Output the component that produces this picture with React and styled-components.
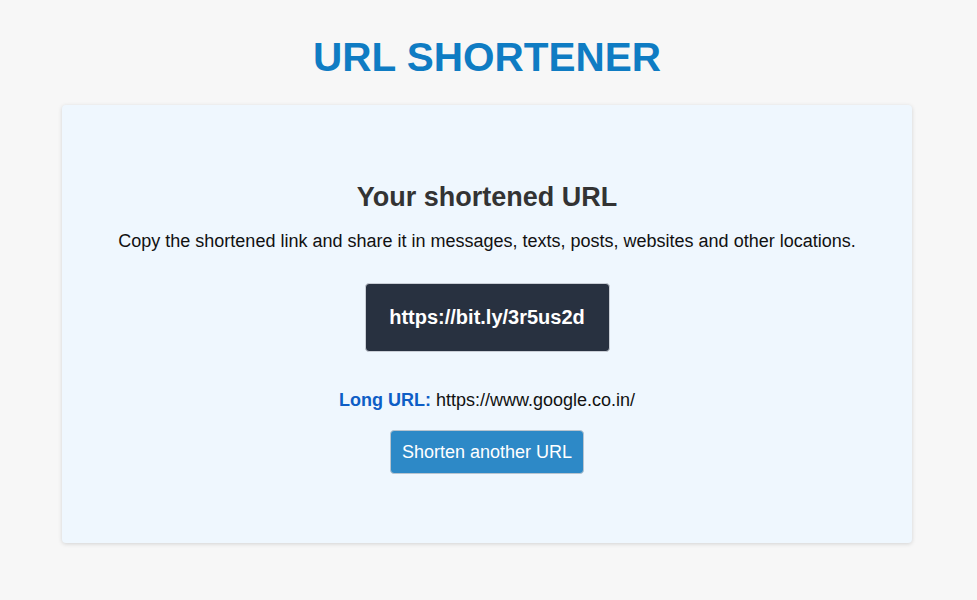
import React from 'react';
import styled, { createGlobalStyle } from 'styled-components';

const GlobalStyle = createGlobalStyle`
    body {
        margin: 0;
        background: #f7f7f7;
        font-family: "Liberation Sans", Arial, sans-serif;
    }
`;

const Page = styled.div`
    display: flex;
    flex-direction: column;
    align-items: center;
    padding: 30px 3px 56px 0;
`;

const Title = styled.h1`
    margin: 0 0 21px;
    font-size: 40.5px;
    line-height: 54px;
    font-weight: 700;
    color: #0f7cc3;
`;

const Card = styled.div`
    width: 850px;
    box-sizing: border-box;
    background: #eff7fe;
    border-radius: 4px;
    box-shadow: 0 1px 4px rgba(0, 0, 0, 0.15);
    padding: 76px 20px 69px;
    display: flex;
    flex-direction: column;
    align-items: center;
    text-align: center;
`;

const Heading = styled.h2`
    margin: 0;
    font-size: 27px;
    line-height: 32px;
    font-weight: 700;
    color: #333333;
`;

const Text = styled.p`
    margin: 16px 0 0;
    font-size: 18px;
    line-height: 24px;
    color: #111111;
`;

const ShortBox = styled.div`
    margin-top: 30px;
    width: 245px;
    height: 69px;
    box-sizing: border-box;
    display: flex;
    align-items: center;
    justify-content: center;
    background: #283140;
    border: 1px solid #c9ced6;
    border-radius: 4px;
    color: #ffffff;
    font-size: 20px;
    font-weight: 700;
`;

const LongUrl = styled.p`
    margin: 36px 0 0;
    font-size: 18px;
    line-height: 24px;
    color: #111111;
`;

const Label = styled.span`
    color: #0e5ec6;
    font-weight: 700;
`;

const Button = styled.button`
    margin-top: 18px;
    height: 44px;
    box-sizing: border-box;
    padding: 0 11px;
    background: #2d89c7;
    border: 1px solid #b8c4cf;
    border-radius: 4px;
    color: #ffffff;
    font-family: inherit;
    font-size: 18px;
    cursor: pointer;
`;

export default function App() {
    return (
        <Page>
            <GlobalStyle />
            <Title>URL SHORTENER</Title>
            <Card>
                <Heading>Your shortened URL</Heading>
                <Text>Copy the shortened link and share it in messages, texts, posts, websites and other locations.</Text>
                <ShortBox>https://bit.ly/3r5us2d</ShortBox>
                <LongUrl><Label>Long URL:</Label> https://www.google.co.in/</LongUrl>
                <Button>Shorten another URL</Button>
            </Card>
        </Page>
    );
}
